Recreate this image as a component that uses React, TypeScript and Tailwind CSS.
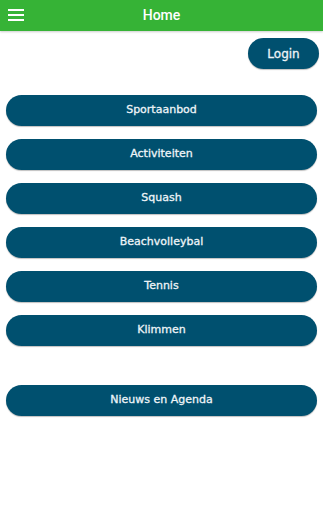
import React from "react";

const items = ["Sportaanbod", "Activiteiten", "Squash", "Beachvolleybal", "Tennis", "Klimmen"];

function NavButton({ label }: { label: string }) {
  return (
    <button className="h-[31px] w-full rounded-full bg-[#00506f] text-[11px] text-[#eef4f8] shadow-[0_1px_1px_rgba(0,0,0,0.25)] [font-family:'DejaVu_Sans',sans-serif] [-webkit-text-stroke:0.3px_#eef4f8]">
      {label}
    </button>
  );
}

export default function App() {
  return (
    <div className="min-h-[512px] bg-white">
      {/* Header */}
      <div className="relative flex h-[31px] items-center justify-center bg-[#36b336] shadow-[0_1px_2px_rgba(0,0,0,0.2)]">
        <button className="absolute left-[8px] top-[9px] flex w-[16px] flex-col gap-[3px]">
          <span className="h-[2px] w-full bg-white"></span>
          <span className="h-[2px] w-full bg-white"></span>
          <span className="h-[2px] w-full bg-white"></span>
        </button>
        <h1 className="text-[14px] font-medium text-white [font-family:Roboto,sans-serif]">Home</h1>
      </div>

      <div className="px-[6px]">
        <div className="flex justify-end pt-[7px]">
          <button className="mr-[-2px] h-[31px] w-[71px] rounded-full bg-[#00506f] text-[12px] text-[#eef4f8] shadow-[0_1px_1px_rgba(0,0,0,0.25)] [font-family:'DejaVu_Sans',sans-serif] [-webkit-text-stroke:0.3px_#eef4f8]">
            Login
          </button>
        </div>

        <div className="mt-[26px] flex flex-col gap-[13px]">
          {items.map((it) => (
            <NavButton key={it} label={it} />
          ))}
        </div>

        <div className="mt-[39px]">
          <NavButton label="Nieuws en Agenda" />
        </div>
      </div>
    </div>
  );
}
